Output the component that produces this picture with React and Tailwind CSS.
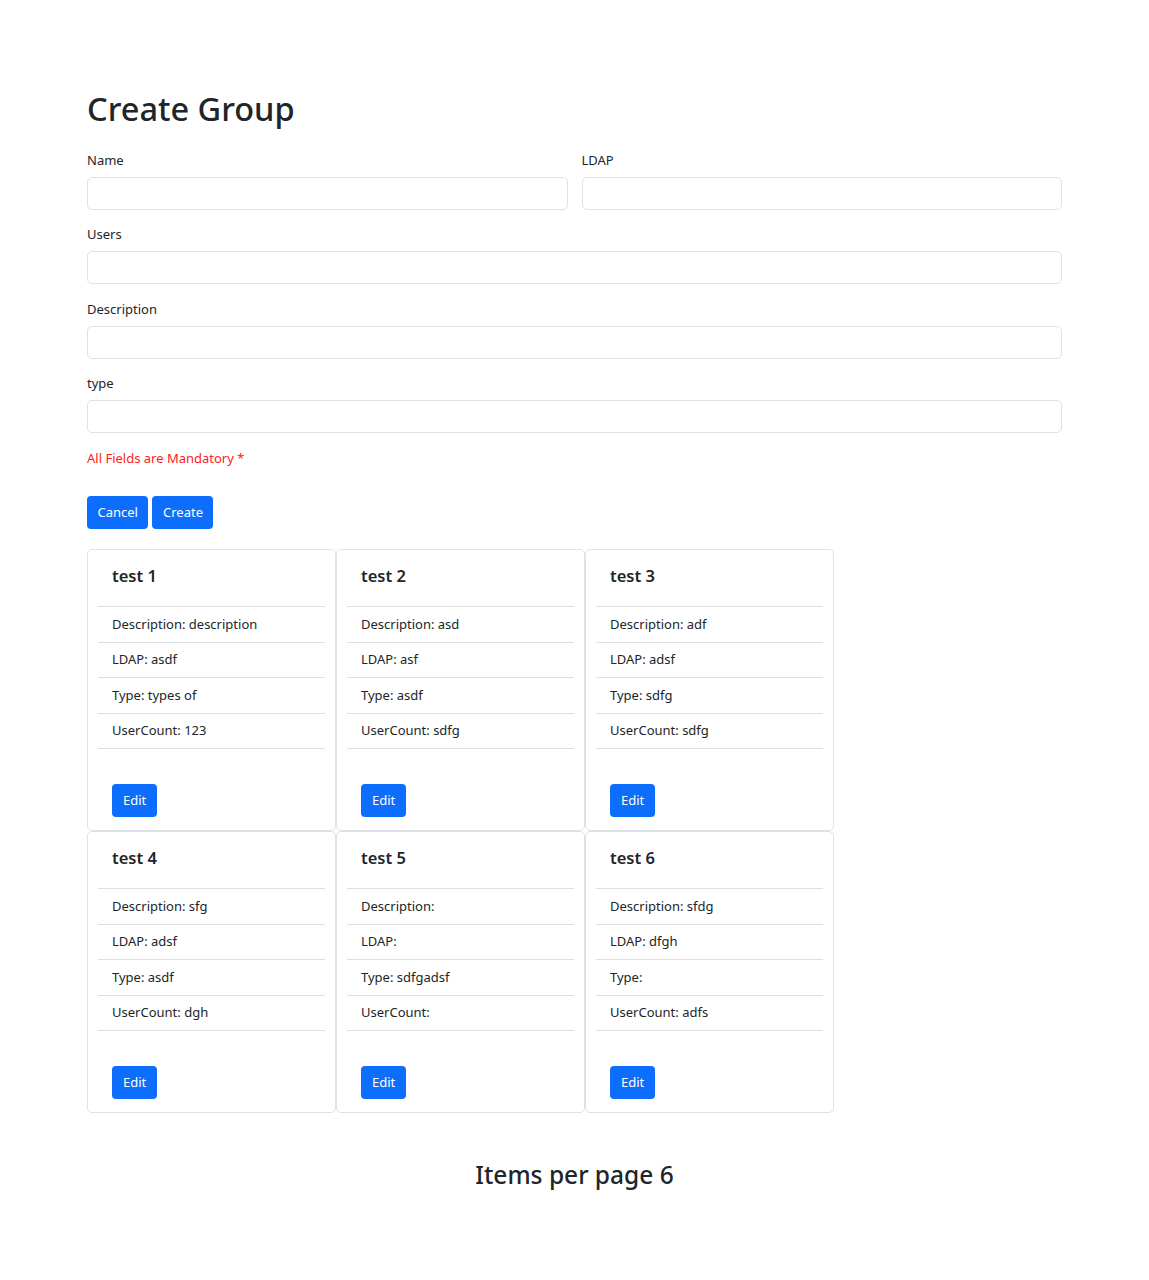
const groups = [
  { name: 'test 1', description: 'description', ldap: 'asdf', type: 'types of', userCount: '123' },
  { name: 'test 2', description: 'asd', ldap: 'asf', type: 'asdf', userCount: 'sdfg' },
  { name: 'test 3', description: 'adf', ldap: 'adsf', type: 'sdfg', userCount: 'sdfg' },
  { name: 'test 4', description: 'sfg', ldap: 'adsf', type: 'asdf', userCount: 'dgh' },
  { name: 'test 5', description: '', ldap: '', type: 'sdfgadsf', userCount: '' },
  { name: 'test 6', description: 'sfdg', ldap: 'dfgh', type: '', userCount: 'adfs' },
];

const Field = ({ label, className = '' }) => (
  <div className={`flex flex-col ${className}`}>
    <label className="mb-[6px] text-[13px] leading-[21px]">{label}</label>
    <input className="h-[33px] w-full rounded-[5px] border border-[#dee2e6] bg-white px-[10px] text-[13px] outline-none" />
  </div>
);

const GroupCard = ({ g }) => (
  <div className="flex h-[282px] flex-col rounded-[5px] border border-[#dee2e6] bg-white px-[10px]">
    <div className="px-[14px] pt-[15px] pb-[20px] text-[16.5px] font-semibold leading-[21px]">{g.name}</div>
    <ul className="text-[13px] leading-[21px]">
      {[
        `Description: ${g.description}`,
        `LDAP: ${g.ldap}`,
        `Type: ${g.type}`,
        `UserCount: ${g.userCount}`,
      ].map((t) => (
        <li key={t} className="border-t border-[#dfdfdf] px-[14px] py-[6.75px] last:border-b">
          {t}
        </li>
      ))}
    </ul>
    <div className="px-[14px] pt-[35px]">
      <button className="h-[33px] rounded-[4px] bg-[#0d6efd] px-[11px] text-[13px] text-white">Edit</button>
    </div>
  </div>
);

export default function App() {
  return (
    <div
      className="min-h-[1280px] bg-white text-[#212529]"
      style={{ fontFamily: '"Noto Sans", "Open Sans", sans-serif' }}
    >
      <div className="mx-auto w-[975px] pt-[88px]">
        <h1 className="mb-[20px] text-[32.5px] font-medium leading-[42px]">Create Group</h1>

        <div className="grid grid-cols-2 gap-x-[14px]">
          <Field label="Name" />
          <Field label="LDAP" />
        </div>
        <Field label="Users" className="mt-[14px]" />
        <Field label="Description" className="mt-[15px]" />
        <Field label="type" className="mt-[14px]" />

        <p className="mt-[15px] text-[13px] leading-[21px] text-[#ff1a1a]">All Fields are Mandatory *</p>

        <div className="mt-[27px] flex gap-[4px]">
          <button className="h-[33px] rounded-[4px] bg-[#0d6efd] px-[10.5px] text-[13px] text-white">Cancel</button>
          <button className="h-[33px] rounded-[4px] bg-[#0d6efd] px-[10.5px] text-[13px] text-white">Create</button>
        </div>

        <div className="mt-[20px] grid grid-cols-[249px_249px_249px]">
          {groups.map((g) => (
            <GroupCard key={g.name} g={g} />
          ))}
        </div>

        <h3 className="mt-[47px] text-center text-[24.5px] font-medium leading-[30px]">Items per page 6</h3>
      </div>
    </div>
  );
}
